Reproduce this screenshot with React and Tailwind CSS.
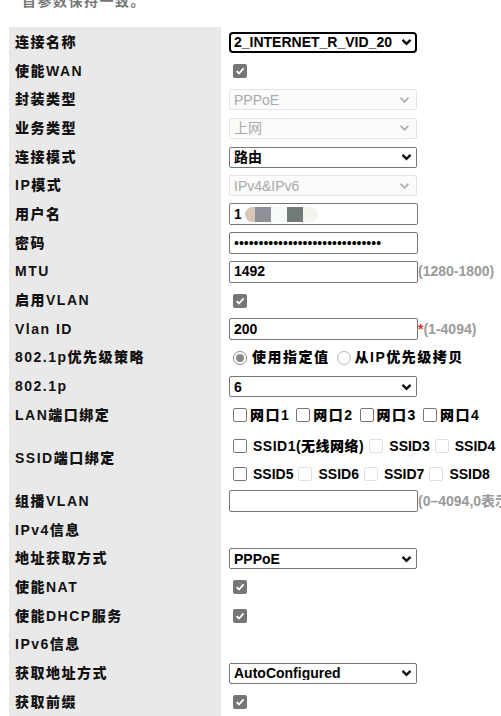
import React from "react";

const FONT = { fontFamily: '"Liberation Sans", Arial, "Noto Sans CJK SC", sans-serif' };

function Chevron({ disabled }) {
  return (
    <svg width="11" height="8" viewBox="0 0 11 8" className="shrink-0">
      <path
        d="M1.5 1.8 L5.5 5.8 L9.5 1.8"
        fill="none"
        stroke={disabled ? "#a8a8a8" : "#111"}
        strokeWidth={disabled ? "1.6" : "2.4"}
      />
    </svg>
  );
}

function Select({ value, disabled, focused }) {
  const box = focused
    ? "border-2 border-black rounded-[4px] pl-[3px] pr-[3px]"
    : disabled
    ? "border border-[#e3e3e3] rounded-[2px] bg-[#fbfbfb] pl-[4px] pr-[6px]"
    : "border border-[#767676] rounded-[2px] pl-[4px] pr-[4px]";
  return (
    <div
      className={`w-[188px] h-[21px] shrink-0 flex items-center justify-between text-[14px] tracking-normal ${box} ${
        disabled ? "text-[#a9a9a9] font-normal" : "text-black font-bold"
      }`}
    >
      <span className="truncate leading-none">{value}</span>
      <Chevron disabled={disabled} />
    </div>
  );
}

function Input({ children }) {
  return (
    <div className="w-[189px] h-[22px] shrink-0 border border-[#767676] rounded-[2px] flex items-center pl-[4px] text-[14px] font-bold tracking-normal text-black overflow-hidden">
      {children}
    </div>
  );
}

function Check({ checked, disabled, className = "ml-[4px] mr-[6px]" }) {
  if (checked) {
    return (
      <span className={`inline-flex w-[14px] h-[14px] rounded-[2px] bg-[#767676] items-center justify-center shrink-0 ${className}`}>
        <svg width="10" height="10" viewBox="0 0 10 10">
          <path d="M1.6 5.2 L4 7.5 L8.6 2.4" fill="none" stroke="#fff" strokeWidth="1.8" />
        </svg>
      </span>
    );
  }
  return (
    <span
      className={`inline-block w-[14px] h-[14px] rounded-[2px] border bg-white shrink-0 ${className} ${
        disabled ? "border-[#e0e0e0]" : "border-[#767676]"
      }`}
    />
  );
}

function Radio({ checked, className }) {
  return (
    <span
      className={`inline-flex w-[14px] h-[14px] rounded-full border items-center justify-center shrink-0 ${className} ${
        checked ? "border-[#8a8a8a]" : "border-[#b5b5b5]"
      }`}
    >
      {checked && <span className="w-[8px] h-[8px] rounded-full bg-[#8a8a8a]" />}
    </span>
  );
}

function Row({ label, children, tall }) {
  return (
    <div className={`flex ${tall ? "h-[57.4px]" : "h-[28.7px]"}`}>
      <div className="w-[212px] shrink-0 bg-[#e9e9e9] flex items-center pl-[6px] text-[14px] font-[800] tracking-[1.5px] text-[#111]">
        {label}
      </div>
      <div className="flex-1 flex items-center pl-[8px] min-w-0 overflow-hidden">{children}</div>
    </div>
  );
}

function Hint({ children }) {
  return <span className="text-[14px] font-bold text-[#9a9a9a] whitespace-nowrap">{children}</span>;
}

export default function App() {
  return (
    <div className="w-[501px] h-[716px] overflow-hidden bg-white" style={FONT}>
      <div className="h-[27px] overflow-hidden">
        <div className="pl-[22px] mt-[-9px] text-[14px] font-bold text-[#777] tracking-[1.5px]">首参数保持一致。</div>
      </div>
      <div className="ml-[9px] bg-[#e9e9e9] w-[212px] h-[1px]" />
      <div className="ml-[9px]">
        <Row label="连接名称">
          <Select value="2_INTERNET_R_VID_20" focused />
        </Row>
        <Row label="使能WAN">
          <Check checked />
        </Row>
        <Row label="封装类型">
          <Select value="PPPoE" disabled />
        </Row>
        <Row label="业务类型">
          <Select value="上网" disabled />
        </Row>
        <Row label="连接模式">
          <Select value="路由" />
        </Row>
        <Row label="IP模式">
          <Select value="IPv4&IPv6" disabled />
        </Row>
        <Row label="用户名">
          <Input>
            <span className="text-black">1</span>
            <span className="flex items-center ml-[3px] h-[15px] rounded-full shadow-[0_0_5px_3px_rgba(255,255,255,0.85)]">
              <span className="w-[10px] h-[15px] bg-[#d9c7b6] rounded-l-full" />
              <span className="w-[16px] h-[15px] bg-[#8b9196]" />
              <span className="w-[16px] h-[15px] bg-[#f5fbf8]" />
              <span className="w-[16px] h-[15px] bg-[#717b79]" />
              <span className="w-[15px] h-[15px] bg-[#f3f5ec] rounded-r-full" />
            </span>
          </Input>
        </Row>
        <Row label="密码">
          <Input>
            <span className="font-normal">{"•".repeat(30)}</span>
          </Input>
        </Row>
        <Row label="MTU">
          <Input>1492</Input>
          <Hint>(1280-1800)</Hint>
        </Row>
        <Row label="启用VLAN">
          <Check checked />
        </Row>
        <Row label="Vlan ID">
          <Input>200</Input>
          <span className="text-[14px] font-bold text-[#e0301e]">*</span>
          <Hint>(1-4094)</Hint>
        </Row>
        <Row label="802.1p优先级策略">
          <div className="flex items-center text-[14px] font-[800] tracking-[1.5px] text-black whitespace-nowrap">
            <Radio checked className="ml-[4px] mr-[5px]" />
            <span>使用指定值</span>
            <Radio className="ml-[7px] mr-[4px]" />
            <span>从IP优先级拷贝</span>
          </div>
        </Row>
        <Row label="802.1p">
          <Select value="6" />
        </Row>
        <Row label="LAN端口绑定">
          <div className="flex items-center text-[14px] font-[800] tracking-[1.5px] text-black whitespace-nowrap">
            <Check className="ml-[4px] mr-[3px]" />
            <span>网口1</span>
            <Check className="ml-[6px] mr-[3px]" />
            <span>网口2</span>
            <Check className="ml-[6px] mr-[3px]" />
            <span>网口3</span>
            <Check className="ml-[6px] mr-[3px]" />
            <span>网口4</span>
          </div>
        </Row>
        <Row label="SSID端口绑定" tall>
          <div className="flex flex-col gap-[7px] mt-[4px] text-[14px] font-[800] text-black whitespace-nowrap">
            <div className="flex items-center">
              <Check />
              <span className="tracking-[0.5px]">SSID1(无线网络)</span>
              <Check disabled className="ml-[5px] mr-[6px]" />
              <span>SSID3</span>
              <Check disabled className="ml-[5px] mr-[6px]" />
              <span>SSID4</span>
            </div>
            <div className="flex items-center">
              <Check />
              <span>SSID5</span>
              <Check disabled className="ml-[5px] mr-[6px]" />
              <span>SSID6</span>
              <Check disabled className="ml-[5px] mr-[6px]" />
              <span>SSID7</span>
              <Check disabled className="ml-[5px] mr-[6px]" />
              <span>SSID8</span>
            </div>
          </div>
        </Row>
        <Row label="组播VLAN">
          <Input />
          <Hint>(0–4094,0表示不使能)</Hint>
        </Row>
        <Row label="IPv4信息" />
        <Row label="地址获取方式">
          <Select value="PPPoE" />
        </Row>
        <Row label="使能NAT">
          <Check checked />
        </Row>
        <Row label="使能DHCP服务">
          <Check checked />
        </Row>
        <Row label="IPv6信息" />
        <Row label="获取地址方式">
          <Select value="AutoConfigured" />
        </Row>
        <Row label="获取前缀">
          <Check checked />
        </Row>
      </div>
    </div>
  );
}
